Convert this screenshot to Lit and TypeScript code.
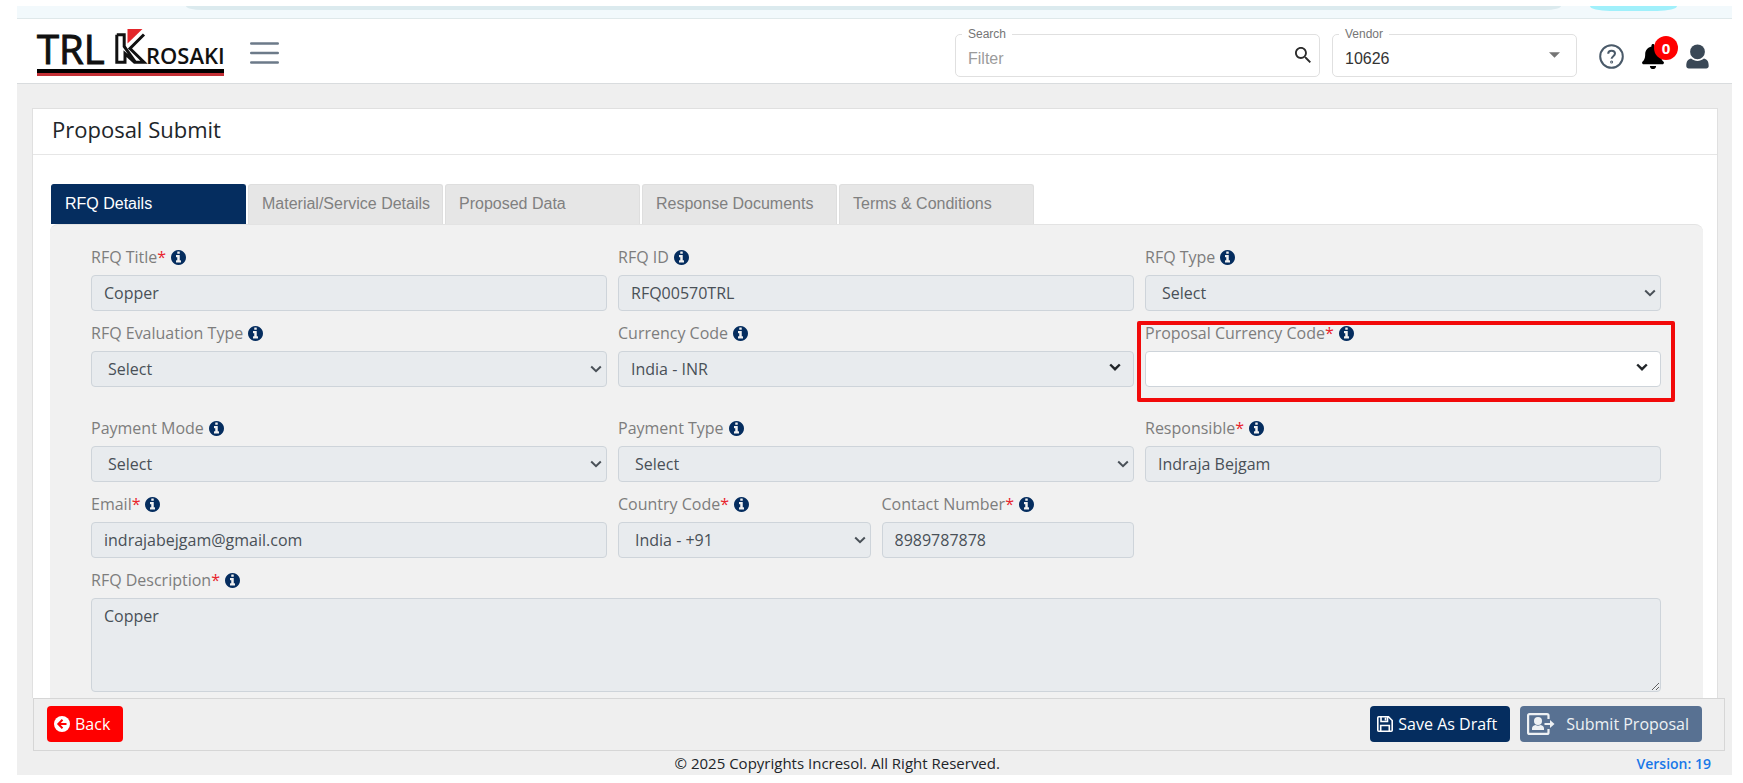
import { LitElement, html, css, svg, nothing } from "lit";
import { customElement, property } from "lit/decorators.js";

const INFO_PATH =
  "M1024 1376v-160q0-14-9-23t-23-9h-96v-512q0-14-9-23t-23-9h-320q-14 0-23 9t-9 23v160q0 14 9 23t23 9h96v320h-96q-14 0-23 9t-9 23v160q0 14 9 23t23 9h448q14 0 23-9t9-23zm-128-896v-160q0-14-9-23t-23-9h-192q-14 0-23 9t-9 23v160q0 14 9 23t23 9h192q14 0 23-9t9-23zm640 416q0 209-103 385.500t-279.500 279.500-385.500 103-385.500-103-279.500-279.500-103-385.500 103-385.500 279.500-279.500 385.500-103 385.500 103 279.500 279.500 103 385.500z";

type Kind = "text" | "select" | "picker" | "area";

interface Field {
  id: string;
  label: string;
  kind: Kind;
  value: string;
  required?: boolean;
  half?: boolean;
  open?: boolean;
  highlight?: boolean;
}

const ROWS: Field[][] = [
  [
    { id: "title", label: "RFQ Title", kind: "text", value: "Copper", required: true },
    { id: "rfqid", label: "RFQ ID", kind: "text", value: "RFQ00570TRL" },
    { id: "type", label: "RFQ Type", kind: "select", value: "Select" },
  ],
  [
    { id: "eval", label: "RFQ Evaluation Type", kind: "select", value: "Select" },
    { id: "currency", label: "Currency Code", kind: "picker", value: "India - INR" },
    { id: "proposal", label: "Proposal Currency Code", kind: "picker", value: "", required: true, open: true, highlight: true },
  ],
  [
    { id: "mode", label: "Payment Mode", kind: "select", value: "Select" },
    { id: "ptype", label: "Payment Type", kind: "select", value: "Select" },
    { id: "resp", label: "Responsible", kind: "text", value: "Indraja Bejgam", required: true },
  ],
  [
    { id: "email", label: "Email", kind: "text", value: "indrajabejgam@gmail.com", required: true },
    { id: "country", label: "Country Code", kind: "select", value: "India - +91", required: true, half: true },
    { id: "contact", label: "Contact Number", kind: "text", value: "8989787878", required: true, half: true },
  ],
  [{ id: "desc", label: "RFQ Description", kind: "area", value: "Copper", required: true }],
];

@customElement("form-field")
class FormField extends LitElement {
  @property({ attribute: false }) field!: Field;

  static styles = css`
    :host {
      display: block;
      position: relative;
      min-width: 0;
    }
    .label {
      display: flex;
      align-items: center;
      height: 24px;
      margin-bottom: 6px;
      font-size: 16px;
      line-height: 24px;
      color: #7d7d7d;
      white-space: nowrap;
    }
    .star {
      color: #e8242c;
    }
    .info {
      width: 15px;
      height: 15px;
      margin-left: 5px;
      fill: #052d5f;
    }
    .control {
      display: block;
      box-sizing: border-box;
      width: 100%;
      height: 36px;
      margin: 0;
      padding: 0 12px;
      border: 1px solid #ced4da;
      border-radius: 4px;
      background: #e8ebee;
      color: #495057;
      font: 16px/24px "Open Sans", sans-serif;
      opacity: 1;
      appearance: none;
      outline: none;
    }
    .select {
      padding: 0 16px;
    }
    .open {
      background: #fff;
    }
    .area {
      height: 94px;
      padding: 5px 12px;
      resize: both;
    }
    .box {
      display: grid;
      align-items: center;
    }
    .box > * {
      grid-area: 1 / 1;
    }
    .chevron {
      justify-self: end;
      width: 12px;
      height: 8px;
      margin-right: 5px;
      fill: none;
      stroke: #495057;
      stroke-width: 2;
      pointer-events: none;
    }
    .strong {
      margin-right: 13px;
      margin-bottom: 4px;
      stroke: #212529;
      stroke-width: 2.4;
    }
    .ring {
      position: absolute;
      inset: 0 -14px -15px -8px;
      border: 4px solid #f20a0a;
      border-radius: 2px;
      pointer-events: none;
    }
  `;

  private control(f: Field) {
    if (f.kind === "text") {
      return html`<input id=${f.id} class="control" type="text" .value=${f.value} disabled />`;
    }
    if (f.kind === "area") {
      return html`<textarea id=${f.id} class="control area" .value=${f.value} readonly></textarea>`;
    }
    const picker = f.kind === "picker";
    return html`<div class="box">
      <select id=${f.id} class="control ${picker ? "" : "select"} ${f.open ? "open" : ""}" ?disabled=${!f.open}>
        <option>${f.value}</option>
      </select>
      <svg class="chevron ${picker ? "strong" : ""}" viewBox="0 0 12 8"><path d="M1.200 1.500 6 6.200 10.800 1.500" /></svg>
    </div>`;
  }

  render() {
    const f = this.field;
    return html`<label class="label" for=${f.id}
        ><span>${f.label}</span>${f.required ? html`<span class="star">*</span>` : nothing}
        <svg class="info" viewBox="0 128 1536 1536"><path d=${INFO_PATH} /></svg>
      </label>
      ${this.control(f)} ${f.highlight ? html`<div class="ring"></div>` : nothing}`;
  }
}

const logo = svg`
  <text class="logo-big" x="0" y="35">TRL</text>
  <path d="M79.800 5.800h7.400v11.700l11 15.300M79.800 5.800v27.400h8.200v-8.500l9.500 8.500h9.500L93 19.500 107 5.500" fill="none" stroke="#111" stroke-width="3" />
  <path d="M90.500 0H105.500L90.500 14.500z" fill="#e3262b" />
  <text class="logo-small" x="109" y="35">ROSAKI</text>
  <rect x="0" y="40" width="187" height="4" fill="#000" />
  <rect x="0" y="44" width="187" height="3" fill="#c22f35" />
`;

@customElement("app-root")
class AppRoot extends LitElement {
  static styles = css`
    :host {
      display: block;
      box-sizing: border-box;
      min-height: 100vh;
      padding: 6px 11px 8px 17px;
      background: #fff;
      color: #212529;
      font: 16px/24px "Open Sans", sans-serif;
    }
    .screen {
      background: #efefef;
    }
    .strip {
      display: flex;
      align-items: flex-start;
      gap: 29px;
      box-sizing: border-box;
      height: 13px;
      padding: 0 55px 0 169px;
      border-bottom: 1px solid #dfe8ea;
      background: #f2f9fc;
    }
    .address {
      flex: 1;
      height: 4px;
      border-radius: 0 0 16px 16px / 0 0 4px 4px;
      background: #dbeaee;
    }
    .chip {
      width: 87px;
      height: 5px;
      border-radius: 0 0 20px 20px / 0 0 5px 5px;
      background: #a0f0fb;
    }
    .header {
      display: flex;
      align-items: center;
      box-sizing: border-box;
      height: 65px;
      padding: 8px 23px 0 20px;
      border-bottom: 1px solid #d9dcde;
      background: #fff;
    }
    .brand {
      display: flex;
      align-items: center;
      gap: 26px;
      margin-bottom: 5px;
    }
    .logo {
      width: 187px;
      height: 47px;
      overflow: visible;
    }
    .logo-big {
      font: 400 40px "Open Sans", sans-serif;
      fill: #111;
      stroke: #111;
      stroke-width: 1px;
    }
    .logo-small {
      font: 600 22px "Open Sans", sans-serif;
      fill: #111;
    }
    .plain {
      display: flex;
      padding: 0;
      border: 0;
      background: none;
    }
    .outlined {
      position: relative;
      display: flex;
      align-items: center;
      box-sizing: border-box;
      height: 43px;
      padding: 0 8px 0 12px;
      border: 1px solid #e0e0e0;
      border-radius: 5px;
      font-family: "Liberation Sans", sans-serif;
    }
    .outlined label {
      position: absolute;
      top: -8px;
      left: 6px;
      padding: 0 6px;
      background: #fff;
      color: #757575;
      font-size: 12px;
      line-height: 14px;
    }
    .outlined input,
    .outlined select {
      flex: 1;
      min-width: 0;
      margin: 0;
      padding: 7px 0 0;
      border: 0;
      outline: none;
      background: none;
      appearance: none;
      color: #333;
      font: 16px/20px "Liberation Sans", sans-serif;
    }
    .outlined input::placeholder {
      color: #9b9b9b;
      opacity: 1;
    }
    .search {
      width: 365px;
      margin-left: auto;
    }
    .vendor {
      width: 245px;
      margin: 0 22px 0 12px;
      padding-right: 16px;
    }
    .account-tools {
      display: flex;
      align-items: center;
      padding-top: 3px;
    }
    .alerts {
      position: relative;
      margin: 0 22px 0 18px;
    }
    .badge {
      position: absolute;
      top: -8px;
      left: 12px;
      width: 24px;
      height: 24px;
      border-radius: 12px;
      background: #f00;
      color: #fff;
      font: 700 15px/24px "Open Sans", sans-serif;
      text-align: center;
    }
    .card {
      margin: 24px 14px 0 15px;
      border: 1px solid #e0e0e0;
      border-bottom: 0;
      background: #fff;
    }
    .title {
      margin: 0;
      padding: 8px 19px 13px;
      border-bottom: 1px solid #e6e6e6;
      font-size: 22px;
      font-weight: 500;
      line-height: 24px;
    }
    .content {
      padding: 29px 14px 0 17px;
    }
    .tabs {
      display: flex;
      gap: 2px;
      padding-left: 1px;
    }
    .tab {
      box-sizing: border-box;
      width: 195px;
      height: 40px;
      padding: 0 0 1px 13px;
      border: 1px solid #dedede;
      border-bottom: 0;
      border-radius: 3px 3px 0 0;
      background: #e6e6e6;
      color: #808080;
      font: 16px/20px "Liberation Sans", sans-serif;
      text-align: left;
      white-space: nowrap;
    }
    .active {
      border-color: #052d5f;
      background: #052d5f;
      color: #fff;
    }
    .panel {
      display: grid;
      row-gap: 10px;
      padding: 20px 42px 6px 41px;
      border-top: 1px solid #e3e3e3;
      border-radius: 8px 8px 0 0;
      background: #f1f1f1;
    }
    .row {
      display: grid;
      grid-template-columns: repeat(6, 1fr);
      column-gap: 11px;
    }
    .row:nth-child(2) {
      margin-bottom: 19px;
    }
    .third {
      grid-column: span 2;
    }
    .half {
      grid-column: span 1;
    }
    .full {
      grid-column: 1 / -1;
    }
    .actions {
      display: flex;
      align-items: center;
      gap: 10px;
      box-sizing: border-box;
      height: 53px;
      margin: 0 7px 0 16px;
      padding: 0 22px 1px 13px;
      border: 1px solid #d6d6d6;
      background: #efefef;
    }
    .btn {
      display: flex;
      align-items: center;
      gap: 5px;
      height: 36px;
      padding: 0 13px 0 7px;
      border: 0;
      border-radius: 4px;
      background: #052d5f;
      color: #fff;
      font: 16px/24px "Open Sans", sans-serif;
      white-space: nowrap;
    }
    .back {
      margin-right: auto;
      background: #f00;
    }
    .submit {
      gap: 11px;
      background: #587192;
      color: #eef1f4;
    }
    .footer {
      display: grid;
      grid-template-columns: 1fr auto;
      box-sizing: border-box;
      height: 24px;
      padding: 1px 21px 0;
      font-size: 15px;
      line-height: 23px;
      text-align: center;
    }
    .version {
      color: #1877e8;
      font-size: 14px;
      font-weight: 600;
    }
  `;

  render() {
    const tabs = ["RFQ Details", "Material/Service Details", "Proposed Data", "Response Documents", "Terms & Conditions"];
    return html`
      <div class="screen">
        <div class="strip"><div class="address"></div><div class="chip"></div></div>
        <header class="header">
          <div class="brand">
            <svg class="logo" viewBox="0 0 187 47" role="img" aria-label="TRL Krosaki">${logo}</svg>
            <button class="plain" aria-label="Menu">
              <svg width="29" height="22" viewBox="0 0 29 22" stroke="#6c7a89" stroke-width="2.400" stroke-linecap="round"><path d="M1.200 1.500h26.600M1.200 11h26.600M1.200 20.500h26.600" /></svg>
            </button>
          </div>
          <div class="outlined search">
            <label for="search">Search</label>
            <input id="search" type="text" placeholder="Filter" />
            <svg width="16" height="16" viewBox="3 3 17.500 17.500" fill="#2b2b2b"><path d="M15.500 14h-.79l-.28-.27C15.410 12.590 16 11.110 16 9.500 16 5.910 13.090 3 9.500 3S3 5.910 3 9.500 5.910 16 9.500 16c1.610 0 3.090-.59 4.230-1.570l.27.28v.79l5 4.990L20.490 19l-4.990-5zm-6 0C7.010 14 5 11.990 5 9.500S7.010 5 9.500 5 14 7.010 14 9.500 11.990 14 9.500 14z" /></svg>
          </div>
          <div class="outlined vendor">
            <label for="vendor">Vendor</label>
            <select id="vendor"><option>10626</option></select>
            <svg width="11" height="6" viewBox="0 0 10 5" fill="#757575"><path d="M0 0h10L5 5z" /></svg>
          </div>
          <div class="account-tools">
            <button class="plain" aria-label="Help">
              <svg width="25" height="25" viewBox="0 0 25 25" fill="none" stroke="#4a5a69" stroke-width="2"><circle cx="12.500" cy="12.500" r="11.300" /><path d="M9.200 9.800c0-4.300 6.800-4.100 6.800-.2 0 2.600-3.400 2.600-3.400 5.200" /><circle cx="12.600" cy="18" r=".5" /></svg>
            </button>
            <button class="plain alerts" aria-label="Notifications">
              <svg width="22" height="25" viewBox="0 0 448 512"><path d="M224 512c35.320 0 63.970-28.650 63.970-64H160.030c0 35.350 28.650 64 63.970 64zm215.390-149.710c-19.320-20.760-55.470-51.990-55.470-154.290 0-77.700-54.480-139.900-127.940-155.160V32c0-17.670-14.320-32-31.980-32s-31.980 14.330-31.980 32v20.840C118.560 68.100 64.080 130.300 64.080 208c0 102.300-36.150 133.530-55.470 154.290-6 6.450-8.660 14.160-8.610 21.710.11 16.400 12.980 32 32.100 32h383.800c19.120 0 32-15.600 32.100-32 .05-7.550-2.610-15.270-8.610-21.710z" /></svg>
              <span class="badge">0</span>
            </button>
            <button class="plain" aria-label="Account">
              <svg width="23" height="25" viewBox="0 0 23 25" fill="#3a4856"><circle cx="11.500" cy="7.800" r="7.400" /><path d="M5 14.500c4 3.300 9 3.300 13 0 3.500.8 4.700 3.500 4.700 7.500 0 1.500-1 2.500-2.500 2.500H2.800C1.300 24.500.3 23.500.3 22c0-4 1.200-6.700 4.700-7.500z" /></svg>
            </button>
          </div>
        </header>
        <main>
          <section class="card">
            <h1 class="title">Proposal Submit</h1>
            <div class="content">
              <div class="tabs" role="tablist">
                ${tabs.map((t, i) => html`<button class="tab ${i === 0 ? "active" : ""}" role="tab" aria-selected=${i === 0}>${t}</button>`)}
              </div>
              <div class="panel">
                ${ROWS.map(
                  (row) => html`<div class="row">
                    ${row.map((f) => html`<form-field class=${f.kind === "area" ? "full" : f.half ? "half" : "third"} .field=${f}></form-field>`)}
                  </div>`
                )}
              </div>
            </div>
          </section>
          <div class="actions">
            <button class="btn back">
              <svg width="16" height="16" viewBox="0 0 16 16"><circle cx="8" cy="8" r="8" fill="#fff" /><path d="M8.500 3.800 4.300 8l4.200 4.200M4.500 8h8" fill="none" stroke="#f00" stroke-width="2" /></svg>
              Back
            </button>
            <button class="btn">
              <svg width="16" height="16" viewBox="0 0 16 16" fill="none" stroke="#fff" stroke-width="1.600"><path d="M.8 1.800q0-1 1-1h9.700l3.700 3.700v9.700q0 1-1 1H1.800q-1 0-1-1zM4 1v4.500h6.500V1M3.700 15V9.500h8.600V15" /><path d="M8.500 1.500v3" /></svg>
              Save As Draft
            </button>
            <button class="btn submit" disabled>
              <svg width="28" height="22" viewBox="0 0 28 22" fill="none" stroke="#eef1f4" stroke-width="2.200"><path d="M21.500 6V2.600q0-1.500-1.500-1.500H2.600q-1.500 0-1.500 1.500v16.800q0 1.500 1.500 1.500H20q1.500 0 1.500-1.500V16M17.500 11H25" /><path d="m23 7 4.500 4-4.500 4z" fill="#eef1f4" stroke="none" /><circle cx="11" cy="8" r="4" fill="#eef1f4" stroke="none" /><path d="M5 17v-1.500q0-3 3.500-3.500 2.500 1.300 5 0 3.500.5 3.500 3.500V17z" fill="#eef1f4" stroke="none" /></svg>
              Submit Proposal
            </button>
          </div>
        </main>
        <footer class="footer">
          <span>© 2025 Copyrights Incresol. All Right Reserved.</span>
          <span class="version">Version: 19</span>
        </footer>
      </div>
    `;
  }
}
